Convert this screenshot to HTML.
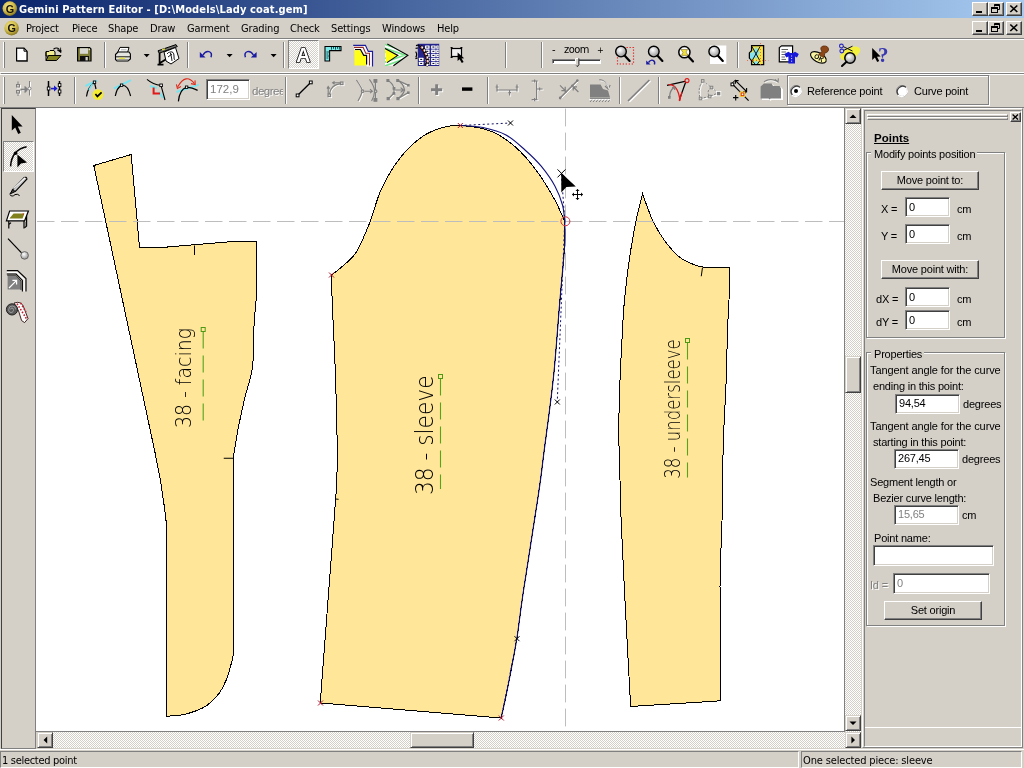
<!DOCTYPE html>
<html>
<head>
<meta charset="utf-8">
<title>Gemini Pattern Editor - [D:\Models\Lady coat.gem]</title>
<style>
html,body{margin:0;padding:0;}
body{width:1024px;height:768px;overflow:hidden;background:#d4d0c8;position:relative;
 font-family:"Liberation Sans",sans-serif;font-size:11px;color:#000;}
.abs{position:absolute;}
.tah{font-family:"DejaVu Sans Condensed","Liberation Sans","DejaVu Sans",sans-serif;font-size:11px;letter-spacing:-0.15px;white-space:nowrap;}
.ms{font-family:"Liberation Sans",sans-serif;font-size:11px;letter-spacing:-0.2px;white-space:nowrap;line-height:13px;}
#title{left:0;top:0;width:1024px;height:18px;background:linear-gradient(to right,#0a246a 0%,#a6caf0 100%);}
#title .t{left:19px;top:3px;color:#fff;font-weight:bold;line-height:14px;letter-spacing:0.13px;}
.wb{position:absolute;width:16px;height:14px;background:#d4d0c8;box-sizing:border-box;
 border:1px solid;border-color:#fff #404040 #404040 #fff;box-shadow:inset -1px -1px 0 #808080;}
.hline{position:absolute;height:1px;left:0;width:1024px;}
.vsep{position:absolute;width:1px;background:#808080;box-shadow:1px 0 0 #fff;}
.grip{position:absolute;width:1px;background:#fff;box-shadow:1px 0 0 #808080;}
.menu span{position:absolute;top:0;line-height:15px;}
.sunk{position:absolute;box-sizing:border-box;background:#fff;border:1px solid;border-color:#808080 #fff #fff #808080;box-shadow:inset 1px 1px 0 #404040,inset -1px -1px 0 #d4d0c8;}
.btn{position:absolute;box-sizing:border-box;background:#d4d0c8;border:1px solid;border-color:#fff #404040 #404040 #fff;box-shadow:inset -1px -1px 0 #808080;text-align:center;}
.grp{position:absolute;box-sizing:border-box;border:1px solid #808080;box-shadow:1px 1px 0 #fff,inset 1px 1px 0 #fff;}
.dith{background-color:#fff;background-image:
 linear-gradient(45deg,#d4d0c8 25%,transparent 25%,transparent 75%,#d4d0c8 75%),
 linear-gradient(45deg,#d4d0c8 25%,transparent 25%,transparent 75%,#d4d0c8 75%);
 background-size:2px 2px;background-position:0 0,1px 1px;}
.pressed{position:absolute;box-sizing:border-box;border:1px solid;border-color:#808080 #fff #fff #808080;}
.sb{position:absolute;width:16px;height:16px;box-sizing:border-box;background:#d4d0c8;border:1px solid;border-color:#d4d0c8 #404040 #404040 #d4d0c8;box-shadow:inset 1px 1px 0 #fff,inset -1px -1px 0 #808080;}
.lbl{position:absolute;margin-top:1px;}
.dis{color:#808080;text-shadow:1px 1px 0 #fff;}
</style>
</head>
<body>
<div id="root" style="position:absolute;left:0;top:0;width:1024px;height:768px;will-change:transform;">

<!-- ===== title bar ===== -->
<div id="title" class="abs">
  <div class="abs tah t">Gemini Pattern Editor - [D:\Models\Lady coat.gem]</div>
  <div class="wb" style="left:972px;top:2px;"></div>
  <div class="wb" style="left:988px;top:2px;"></div>
  <div class="wb" style="left:1006px;top:2px;"></div>
</div>

<!-- ===== menu bar ===== -->
<div class="abs menu tah" style="left:0;top:21px;width:1024px;height:16px;">
  <span style="left:26px">Project</span>
  <span style="left:72px">Piece</span>
  <span style="left:108px">Shape</span>
  <span style="left:150px">Draw</span>
  <span style="left:187px">Garment</span>
  <span style="left:241px">Grading</span>
  <span style="left:290px">Check</span>
  <span style="left:331px">Settings</span>
  <span style="left:382px">Windows</span>
  <span style="left:437px">Help</span>
</div>
<div class="wb" style="left:972px;top:21px;"></div>
<div class="wb" style="left:988px;top:21px;"></div>
<div class="wb" style="left:1006px;top:21px;"></div>

<!-- separators between bands -->
<div class="hline" style="top:38px;background:#808080"></div>
<div class="hline" style="top:39px;background:#fff"></div>
<div class="hline" style="top:72px;background:#fff"></div>
<div class="hline" style="top:73px;background:#808080;left:1px"></div>
<div class="hline" style="top:74px;background:#fff"></div>
<div class="hline" style="top:107px;background:#808080;"></div>

<!-- toolbar 1 grips & separators -->
<div class="grip" style="left:3px;top:42px;height:26px"></div>
<div class="vsep" style="left:104px;top:42px;height:26px"></div>
<div class="vsep" style="left:187px;top:42px;height:26px"></div>
<div class="vsep" style="left:283px;top:42px;height:26px"></div>
<div class="vsep" style="left:505px;top:42px;height:26px"></div>
<div class="vsep" style="left:541px;top:42px;height:26px"></div>
<div class="vsep" style="left:737px;top:42px;height:26px"></div>
<!-- toolbar 2 grips & separators -->
<div class="grip" style="left:3px;top:77px;height:27px"></div>
<div class="vsep" style="left:74px;top:77px;height:27px"></div>
<div class="vsep" style="left:285px;top:77px;height:27px"></div>
<div class="vsep" style="left:418px;top:77px;height:27px"></div>
<div class="vsep" style="left:487px;top:77px;height:27px"></div>
<div class="vsep" style="left:619px;top:77px;height:27px"></div>
<div class="vsep" style="left:658px;top:77px;height:27px"></div>

<!-- pressed "A" button -->
<div class="pressed dith" style="left:288px;top:40px;width:31px;height:29px;"></div>

<!-- zoom slider -->
<div class="abs tah" style="left:552px;top:43px;line-height:14px;">-</div>
<div class="abs tah" style="left:564px;top:43px;line-height:14px;letter-spacing:-0.5px;">zoom</div>
<div class="abs tah" style="left:597px;top:43px;line-height:14px;font-size:9px;">+</div>
<div class="abs" style="left:552px;top:59px;width:49px;height:5px;box-sizing:border-box;background:#fff;border:1px solid;border-color:#808080 #fff #fff #808080;box-shadow:inset 1px 1px 0 #404040"></div>

<!-- angle field in toolbar 2 -->
<div class="sunk" style="left:206px;top:79px;width:44px;height:21px;"></div>
<div class="abs" style="left:210px;top:82px;font-size:11.5px;line-height:14px;color:#808080;">172,9</div>
<div class="abs dis" style="left:252px;top:84px;font-size:11.5px;letter-spacing:-0.5px;line-height:14px;width:31px;overflow:hidden;white-space:nowrap;">degrees</div>

<!-- reference / curve point radio group -->
<div class="grp" style="left:787px;top:75px;width:202px;height:30px;"></div>
<div class="abs" style="left:807px;top:84px;font-size:11px;letter-spacing:-0.15px;line-height:14px;white-space:nowrap;">Reference point</div>
<div class="abs" style="left:914px;top:84px;font-size:11px;letter-spacing:-0.2px;line-height:14px;white-space:nowrap;">Curve point</div>

<!-- ===== left tool palette ===== -->
<div class="abs" style="left:1px;top:108px;width:35px;height:641px;box-sizing:border-box;border:1px solid;border-color:#404040 #808080 #808080 #404040;"></div>
<div class="pressed dith" style="left:3px;top:141px;width:31px;height:31px;"></div>

<!-- ===== canvas ===== -->
<div class="abs" id="canvas" style="left:36px;top:108px;width:808px;height:623px;background:#fff;"></div>
<div class="abs" style="left:844px;top:108px;width:1px;height:624px;background:#808080"></div>
<div class="abs" style="left:36px;top:731px;width:809px;height:1px;background:#808080"></div>

<!-- vertical scrollbar -->
<div class="abs dith" style="left:845px;top:108px;width:16px;height:624px;"></div>
<div class="sb" style="left:845px;top:108px;"></div>
<div class="sb" style="left:845px;top:715px;"></div>
<div class="sb" style="left:845px;top:356px;height:37px;"></div>
<!-- horizontal scrollbar -->
<div class="abs dith" style="left:37px;top:732px;width:824px;height:16px;"></div>
<div class="sb" style="left:37px;top:732px;"></div>
<div class="sb" style="left:845px;top:732px;"></div>
<div class="sb" style="left:410px;top:732px;width:64px;"></div>

<!-- ===== right panel ===== -->
<div class="abs" style="left:862px;top:108px;width:161px;height:640px;box-sizing:border-box;border:1px solid;border-color:#fff #808080 #808080 #fff;"></div>
<div class="abs" style="left:864px;top:110px;width:158px;height:637px;box-sizing:border-box;border:1px solid;border-color:#808080 #fff #fff #808080;"></div>
<div class="abs" style="left:865px;top:727px;width:156px;height:1px;background:#fff"></div>
<!-- gripper bars -->
<div class="abs" style="left:867px;top:114px;width:141px;height:3px;box-sizing:border-box;border:1px solid;border-color:#fff #808080 #808080 #fff;"></div>
<div class="abs" style="left:867px;top:117px;width:141px;height:3px;box-sizing:border-box;border:1px solid;border-color:#fff #808080 #808080 #fff;"></div>
<div class="btn" style="left:1010px;top:112px;width:11px;height:10px;"></div>

<div class="lbl ms" style="left:874px;top:131px;font-weight:bold;font-size:11.5px;text-decoration:underline;letter-spacing:0;">Points</div>

<div class="grp" style="left:866px;top:152px;width:139px;height:186px;"></div>
<div class="lbl ms" style="left:871px;top:147px;background:#d4d0c8;padding:0 2px 0 3px;">Modify points position</div>
<div class="btn ms" style="left:881px;top:171px;width:98px;height:19px;line-height:16px;">Move point to:</div>
<div class="lbl ms" style="left:881px;top:202px;">X =</div>
<div class="sunk" style="left:905px;top:197px;width:45px;height:20px;"></div>
<div class="lbl ms" style="left:909px;top:200px;">0</div>
<div class="lbl ms" style="left:957px;top:202px;">cm</div>
<div class="lbl ms" style="left:881px;top:229px;">Y =</div>
<div class="sunk" style="left:905px;top:224px;width:45px;height:20px;"></div>
<div class="lbl ms" style="left:909px;top:227px;">0</div>
<div class="lbl ms" style="left:957px;top:229px;">cm</div>
<div class="btn ms" style="left:881px;top:260px;width:98px;height:19px;line-height:16px;">Move point with:</div>
<div class="lbl ms" style="left:876px;top:292px;">dX =</div>
<div class="sunk" style="left:905px;top:287px;width:45px;height:20px;"></div>
<div class="lbl ms" style="left:909px;top:290px;">0</div>
<div class="lbl ms" style="left:957px;top:292px;">cm</div>
<div class="lbl ms" style="left:876px;top:315px;">dY =</div>
<div class="sunk" style="left:905px;top:310px;width:45px;height:20px;"></div>
<div class="lbl ms" style="left:909px;top:313px;">0</div>
<div class="lbl ms" style="left:957px;top:315px;">cm</div>

<div class="grp" style="left:866px;top:352px;width:139px;height:274px;"></div>
<div class="lbl ms" style="left:871px;top:347px;background:#d4d0c8;padding:0 2px 0 3px;">Properties</div>
<div class="lbl ms" style="left:870px;top:363px;letter-spacing:-0.1px;">Tangent angle for the curve</div>
<div class="lbl ms" style="left:873px;top:379px;">ending in this point:</div>
<div class="sunk" style="left:895px;top:394px;width:65px;height:20px;"></div>
<div class="lbl ms" style="left:899px;top:396px;">94,54</div>
<div class="lbl ms" style="left:963px;top:397px;">degrees</div>
<div class="lbl ms" style="left:870px;top:419px;letter-spacing:-0.1px;">Tangent angle for the curve</div>
<div class="lbl ms" style="left:873px;top:435px;">starting in this point:</div>
<div class="sunk" style="left:894px;top:449px;width:65px;height:20px;"></div>
<div class="lbl ms" style="left:898px;top:451px;">267,45</div>
<div class="lbl ms" style="left:962px;top:452px;">degrees</div>
<div class="lbl ms" style="left:870px;top:475px;">Segment length or</div>
<div class="lbl ms" style="left:873px;top:491px;">Bezier curve length:</div>
<div class="sunk" style="left:894px;top:505px;width:65px;height:20px;"></div>
<div class="lbl ms" style="left:898px;top:507px;color:#808080;">15,65</div>
<div class="lbl ms" style="left:962px;top:508px;">cm</div>
<div class="lbl ms" style="left:874px;top:531px;">Point name:</div>
<div class="sunk" style="left:873px;top:545px;width:121px;height:21px;"></div>
<div class="lbl ms dis" style="left:870px;top:578px;">Id =</div>
<div class="sunk" style="left:893px;top:573px;width:97px;height:21px;"></div>
<div class="lbl ms" style="left:897px;top:576px;color:#808080;">0</div>
<div class="btn ms" style="left:884px;top:601px;width:98px;height:19px;line-height:16px;">Set origin</div>

<!-- ===== status bar ===== -->
<div class="hline" style="top:749px;background:#fff"></div>
<div class="abs" style="left:0;top:751px;width:799px;height:17px;box-sizing:border-box;border:1px solid;border-color:#808080 #fff #fff #808080;"></div>
<div class="abs" style="left:801px;top:751px;width:221px;height:17px;box-sizing:border-box;border:1px solid;border-color:#808080 #fff #fff #808080;"></div>
<div class="abs tah" style="left:2px;top:754px;line-height:14px;letter-spacing:-0.3px;">1 selected point</div>
<div class="abs tah" style="left:803px;top:754px;line-height:14px;">One selected piece: sleeve</div>

<!--ICONS-->
<svg class="abs" style="left:0;top:0;pointer-events:none" width="1024" height="768" viewBox="0 0 1024 768">
<defs>
  <radialGradient id="gold" cx="0.4" cy="0.35" r="0.7">
    <stop offset="0" stop-color="#f4e88c"/><stop offset="0.55" stop-color="#d2bc4a"/><stop offset="1" stop-color="#7c6c1c"/>
  </radialGradient>
  <radialGradient id="lens" cx="0.4" cy="0.35" r="0.7">
    <stop offset="0" stop-color="#ffffff"/><stop offset="0.5" stop-color="#c8c8c8"/><stop offset="1" stop-color="#8c8c8c"/>
  </radialGradient>
  <g id="wmin"><rect x="4" y="9" width="6" height="2" fill="#000"/></g>
  <g id="wres" fill="none" stroke="#000" stroke-width="1">
    <path d="M6.5,4.5 V2.5 H11.5 V7.5 H9.5"/><path d="M6.5,3.2 H11.5" stroke-width="1.6"/>
    <rect x="3.5" y="5.5" width="6" height="5"/><path d="M3.5,6.2 H9.5" stroke-width="1.6"/>
  </g>
  <g id="wcls"><path d="M4.3,3.5 L11.3,10 M11.3,3.5 L4.3,10" stroke="#000" stroke-width="1.7" fill="none"/></g>
  <g id="mag">
    <circle cx="0" cy="0" r="5.3" fill="url(#lens)" stroke="#000" stroke-width="1.4"/>
    <path d="M3.8,4.2 L8.6,9.3" stroke="#000" stroke-width="2.2" stroke-linecap="round"/>
  </g>
  <g id="dd"><path d="M0,0 h6 l-3,3.2z" fill="#000"/></g>
</defs>

<!-- app icons -->
<circle cx="9.8" cy="8.6" r="7.3" fill="url(#gold)"/>
<text x="9.9" y="12.6" text-anchor="middle" font-family="'Liberation Sans',sans-serif" font-weight="bold" font-size="10.8" fill="#141008">G</text>
<circle cx="11.6" cy="28.1" r="7.3" fill="url(#gold)"/>
<text x="11.7" y="32.1" text-anchor="middle" font-family="'Liberation Sans',sans-serif" font-weight="bold" font-size="10.8" fill="#141008">G</text>

<!-- window buttons glyphs -->
<use href="#wmin" x="972" y="2"/><use href="#wres" x="988" y="2"/><use href="#wcls" x="1006" y="2"/>
<use href="#wmin" x="972" y="21"/><use href="#wres" x="988" y="21"/><use href="#wcls" x="1006" y="21"/>

<!-- ===== toolbar 1 ===== -->
<!-- new -->
<path d="M17.5,49.5 H25.5 L28,52 V62 H17.5Z" fill="#404040" opacity="0.55"/>
<path d="M16.6,48.2 H24 L27,51.2 V60.8 H16.6Z" fill="#fff" stroke="#000" stroke-width="1.2"/>
<path d="M24,48.2 V51.2 H27" fill="none" stroke="#000" stroke-width="1"/>
<!-- open -->
<path d="M46,51.5 H49 L50,50.5 H54 L55,52 V56 H46Z" fill="#f0ec90" stroke="#000" stroke-width="1"/>
<path d="M46,60.5 L48.5,55.5 H61 L56.5,60.5Z" fill="#848420" stroke="#000" stroke-width="1"/>
<path d="M46,52 V60.5" stroke="#000" stroke-width="1"/>
<path d="M53.5,49.2 Q56.5,46.8 59.3,49.3" fill="none" stroke="#000" stroke-width="1.1"/>
<path d="M57.3,50 H61 V52.6Z M60.6,47.6 V51" fill="#000" stroke="#000" stroke-width="0.8"/>
<!-- save -->
<path d="M77.6,47.6 H89.6 L91,49 V61 H77.6Z" fill="#808038" stroke="#000" stroke-width="1.2"/>
<rect x="80" y="48.2" width="8" height="5.6" fill="#d8d8d0"/>
<rect x="80" y="56" width="9" height="5" fill="#101010"/>
<rect x="85.5" y="57" width="2.3" height="3.4" fill="#d0d0c8"/>
<rect x="88.6" y="48.6" width="1.4" height="1.6" fill="#e8e8e0"/>
<!-- printer -->
<path d="M117.6,52.4 L120,47.4 H129 L127.6,52.4Z" fill="#fff" stroke="#000" stroke-width="1"/>
<path d="M121,49.8 H126.6" stroke="#909090" stroke-width="0.7"/>
<path d="M115.5,54.5 L118,52 H129 L130.4,54 V59 L128,61 H117 L115.5,59.5Z" fill="#e4e4e0" stroke="#000" stroke-width="1.1"/>
<path d="M115.5,56.8 H130.4" stroke="#000" stroke-width="0.9"/>
<rect x="119" y="57.6" width="6" height="1.5" fill="#e8e040"/>
<path d="M116.5,59.8 H128.6" stroke="#808080" stroke-width="1"/>
<use href="#dd" x="143.7" y="54"/>
<!-- plotter -->
<path d="M158,50.8 L176,44.6 L177.3,46.6 L159.2,53.2Z" fill="#70706c" stroke="#000" stroke-width="1"/>
<path d="M162,49.9 l3,-1" stroke="#e0e040" stroke-width="1.2"/>
<path d="M159.6,53 V64 M157.5,64.6 H163.5 M160,63 L168,58" stroke="#000" stroke-width="1.8" fill="none"/>
<path d="M164,52 L175.5,47.5 L179,58.5 L171,64 L166,61Z" fill="#fff" stroke="#000" stroke-width="1"/>
<path d="M167,54 Q170,50 171,55 T172,61 M170,52 Q174,51 174,56 T175,59 M168,57 L172,54" fill="none" stroke="#000" stroke-width="0.9"/>
<!-- undo / redo -->
<g fill="#1c1ca0" stroke="none">
  <path d="M199.8,52 V57.4 H205.6Z"/>
  <path d="M243.6,0" />
  <path d="M256.6,52 V57.4 H250.8Z"/>
</g>
<path d="M203,55 Q205.5,50.6 209,51.6 T211,57.2" fill="none" stroke="#1c1ca0" stroke-width="1.5"/>
<path d="M253.4,55 Q250.9,50.6 247.4,51.6 T245.4,57.2" fill="none" stroke="#1c1ca0" stroke-width="1.5"/>
<use href="#dd" x="226.6" y="54"/>
<use href="#dd" x="270.6" y="54"/>
<!-- A -->
<text x="303.2" y="61.6" text-anchor="middle" font-family="'Liberation Sans',sans-serif" font-weight="bold" font-size="19.5" fill="#fff" stroke="#000" stroke-width="1.7" stroke-linejoin="round" paint-order="stroke">A</text>
<!-- ruler L -->
<path d="M325,46.5 H341 V50.6 H329.6 V61 H325Z" fill="#7ce8e8" stroke="#000" stroke-width="1.1"/>
<path d="M326.4,52 h3 M326.4,54 h2 M326.4,56 h3 M326.4,58 h2 M331.5,47 v2.6 M333.5,47 v1.8 M335.5,47 v2.6 M337.5,47 v1.8 M339.4,47 v2.6" stroke="#004040" stroke-width="0.9"/>
<!-- grading -->
<path d="M353.2,45.2 H365.4 L368.3,51.3 H372.5 V66.4 H366.6 V56 H363.4 L360,50.3 H354.4 V48 Z" fill="#fff"/>
<path d="M354.4,50.2 H360.4 L363.6,56 H366.2 V65.6 H354.4Z" fill="#ffff18"/>
<path d="M353.2,45.3 H365.4 L368.3,51.4 H372.5 V66.5" fill="none" stroke="#1c1c9c" stroke-width="1.2"/>
<path d="M354,47.4 H363.1 L365.7,53.3 H369.5 V65.6" fill="none" stroke="#902828" stroke-width="1.1"/>
<path d="M355,49.5 H360.5 L363.7,55.3 H366.6 V64.6" fill="none" stroke="#000" stroke-width="1.2"/>
<!-- triangle -->
<clipPath id="triU"><path d="M385,43.5 L388,43.5 L408,55.2 H385Z"/></clipPath>
<clipPath id="triL"><path d="M385,55.2 H408 L393.4,65.9 H385Z"/></clipPath>
<path d="M385,44.4 L388,44 L407.9,55.2 L393.4,65.8 H385Z" fill="#fff"/>
<g stroke="#78e48c" stroke-width="1.7" clip-path="url(#triU)">
  <path d="M383,43.6 L409,52.8 M383,47.4 L409,56.6 M383,51.2 L409,60.4 M390,42.4 L409,49"/>
</g>
<g stroke="#78e48c" stroke-width="1.7" clip-path="url(#triL)">
  <path d="M383,66.6 L409,57.4 M383,62.8 L409,53.6 M383,59 L409,49.8 M388,68.6 L409,61.2"/>
</g>
<path d="M385.2,48.7 L397.6,55.5 L386,62.8Z" fill="#ffff18"/>
<path d="M387.3,43.9 L407.9,55.2 L393.4,65.8 M385,48.4 L397.8,55.4 L387,62.6" fill="none" stroke="#000" stroke-width="1.1"/>
<!-- grid -->
<rect x="417.8" y="43.8" width="21.4" height="22.2" fill="#24248c"/>
<g fill="#fff"><rect x="425.0" y="45.4" width="4.6" height="3.3" rx="0.5"/><rect x="431.1" y="45.4" width="4.6" height="3.3" rx="0.5"/><rect x="436.2" y="45.4" width="2.6" height="3.3" rx="0.5"/><rect x="425.0" y="49.6" width="4.6" height="3.3" rx="0.5"/><rect x="431.1" y="49.6" width="4.6" height="3.3" rx="0.5"/><rect x="436.2" y="49.6" width="2.6" height="3.3" rx="0.5"/><rect x="425.0" y="53.8" width="4.6" height="3.3" rx="0.5"/><rect x="431.1" y="53.8" width="4.6" height="3.3" rx="0.5"/><rect x="436.2" y="53.8" width="2.6" height="3.3" rx="0.5"/><rect x="418.9" y="57.8" width="4.6" height="3.3" rx="0.5"/><rect x="425.0" y="57.8" width="4.6" height="3.3" rx="0.5"/><rect x="431.1" y="57.8" width="4.6" height="3.3" rx="0.5"/><rect x="436.2" y="57.8" width="2.6" height="3.3" rx="0.5"/><rect x="418.9" y="61.8" width="4.6" height="3.3" rx="0.5"/><rect x="425.0" y="61.8" width="4.6" height="3.3" rx="0.5"/><rect x="431.1" y="61.8" width="4.6" height="3.3" rx="0.5"/><rect x="436.2" y="61.8" width="2.6" height="3.3" rx="0.5"/></g>
<g fill="#101030"><rect x="426.3" y="46.5" width="2" height="1.1"/><rect x="432.4" y="46.5" width="2" height="1.1"/><rect x="437.4" y="46.5" width="1" height="1.1"/><rect x="426.3" y="50.8" width="2" height="1.1"/><rect x="432.4" y="50.8" width="2" height="1.1"/><rect x="437.4" y="50.8" width="1" height="1.1"/><rect x="426.3" y="54.9" width="2" height="1.1"/><rect x="432.4" y="54.9" width="2" height="1.1"/><rect x="437.4" y="54.9" width="1" height="1.1"/><rect x="420.2" y="58.9" width="2" height="1.1"/><rect x="426.3" y="58.9" width="2" height="1.1"/><rect x="432.4" y="58.9" width="2" height="1.1"/><rect x="437.4" y="58.9" width="1" height="1.1"/><rect x="420.2" y="62.9" width="2" height="1.1"/><rect x="426.3" y="62.9" width="2" height="1.1"/><rect x="432.4" y="62.9" width="2" height="1.1"/><rect x="437.4" y="62.9" width="1" height="1.1"/></g>
<path d="M416,45.6 Q418.6,44.4 419.4,46.4 M415.6,48.4 L418,48 M415.6,51.6 Q417.6,54 415.8,57.4 M415.4,58.6 L417.6,58" fill="none" stroke="#000" stroke-width="1.2"/>
<path d="M420.4,46 L424,50.4 L426.4,56 L427.6,62 L426,66" fill="none" stroke="#180808" stroke-width="3.6"/>
<path d="M421.4,46.6 L425,51.4 L427.2,57.4 L428,63.4 L426.6,66.4" fill="none" stroke="#fff" stroke-width="1.8" stroke-dasharray="2.2 1.6"/>
<path d="M420.6,47 L424.4,52 L426.4,58 L427,64" fill="none" stroke="#c02828" stroke-width="0.9" stroke-dasharray="1.4 2.4"/>
<!-- select rect -->
<rect x="451.5" y="48.5" width="10" height="8" fill="#f0f0f0" stroke="#000" stroke-width="1.2"/>
<path d="M450.6,47.6 h2 M460.4,47.6 h2 M450.6,57.4 h2" stroke="#000" stroke-width="1.4"/>
<path d="M457.6,52.4 V61 L459.6,59.2 L461.8,63 L463.6,62 L461.6,58.4 L464.2,58.2Z" fill="#000"/>

<!-- slider thumb -->
<path d="M575.5,58.5 H578.5 V64.5 L577,66.5 L575.5,64.5Z" fill="#d4d0c8" stroke="#808080" stroke-width="1"/>
<path d="M575.5,64.5 V58.5 H578" fill="none" stroke="#fff" stroke-width="1"/>
<path d="M579,58.5 V64.7 L577.2,67" fill="none" stroke="#404040" stroke-width="1"/>
<!-- magnifier 1 : zoom window -->
<rect x="617.5" y="47.5" width="16" height="16.5" fill="none" stroke="#e02020" stroke-width="1.2" stroke-dasharray="1.3 1.7"/>
<use href="#mag" x="621" y="51.6"/>
<!-- magnifier 2 : previous zoom -->
<use href="#mag" x="653.8" y="51.6"/>
<path d="M646.2,60.4 V64.6 H650.6Z" fill="#1c1ca0"/>
<path d="M648.5,62.5 Q650.5,59.4 653,60.4 T654.4,64.6" fill="none" stroke="#1c1ca0" stroke-width="1.4"/>
<!-- magnifier 3 : zoom piece -->
<circle cx="684.4" cy="52.2" r="5.6" fill="#fff" stroke="#000" stroke-width="1.5"/>
<path d="M681,49.5 H687.6 L686,52 L688,55.4 H681.4 L683,52.4Z" fill="#f0e040" stroke="#605010" stroke-width="0.5"/>
<path d="M688.4,56.6 L693,61.4" stroke="#000" stroke-width="2.2" stroke-linecap="round"/>
<!-- magnifier 4 : zoom all -->
<rect x="710" y="45.5" width="16.3" height="18.5" fill="#fff"/>
<use href="#mag" x="714.2" y="51.6"/>
<!-- symmetry icon -->
<path d="M751.6,45.6 H763.6 V64.6 H751.6 V60.4 L749.4,58 V53 L751.6,50.6Z" fill="#f8e440" stroke="#000" stroke-width="1.3"/>
<path d="M756.1,46.6 L759.6,52.8 L756.1,60 L752.6,52.8Z" fill="#84e4f4"/>
<path d="M750,52.4 L752.6,52.8 L754.4,56.6 L752,60 L750,58Z M752.6,64 L756.1,60 L759.4,64Z" fill="#84e4f4"/>
<path d="M752,46.6 L759.8,60.6 M760,46.6 L752.2,60.6 M752.4,61 L755,64 M759.6,61 L757.4,64" stroke="#000" stroke-width="0.9" fill="none"/>
<path d="M760.5,43 V66" stroke="#e85828" stroke-width="0.8" stroke-dasharray="1 2"/>
<path d="M747,60.5 H768.4" stroke="#e85828" stroke-width="0.8" stroke-dasharray="1 2"/>
<!-- doc + shirt -->
<path d="M779.3,47.6 L781.6,45.8 H792.6 V61.8 H779.3Z" fill="#fff" stroke="#000" stroke-width="1.2"/>
<path d="M781.5,49.5 H788 M781.5,52 H786 M781.5,54.5 H785 M781.5,57 H785 M781.5,59.4 H786" stroke="#505050" stroke-width="0.9"/>
<path d="M784.4,54 L788.4,51.8 L790.4,53 H793 L795,51.8 L798.8,54 L797,57.4 L795,56.6 V63.4 H788.4 V56.6 L786.2,57.4Z" fill="#1818d8"/>
<path d="M791.6,55.5 v6.5" stroke="#fff" stroke-width="0.9" stroke-dasharray="1 1.6"/>
<!-- stamp -->
<ellipse cx="818.4" cy="57.4" rx="8.6" ry="4.6" transform="rotate(28 818.4 57.4)" fill="#f8f4a0" stroke="#000" stroke-width="1.1"/>
<path d="M818.6,54.4 L822,51.6 Q819,47 823.4,46 Q828.6,45.6 828.6,50 Q827.6,53 825,52.8 L823.6,57.6Z" fill="#8c4818" stroke="#5c2808" stroke-width="0.8"/>
<text transform="translate(813.6,57.6) rotate(28)" font-family="'Liberation Sans',sans-serif" font-weight="bold" font-size="6.5" fill="#000">OK</text>
<!-- scissors + magnifier -->
<path d="M840,56 Q846,46.5 856,46.5 Q862,47.5 859.5,52.5 Q855,59 848,60.5 Q840.5,61 840,56Z" fill="#f4f040"/>
<circle cx="850" cy="58" r="5.2" fill="url(#lens)" stroke="#000" stroke-width="1.5"/>
<path d="M846.6,61.8 L842,66" stroke="#000" stroke-width="2" stroke-linecap="round"/>
<circle cx="841.4" cy="46" r="1.9" fill="none" stroke="#2828c0" stroke-width="1.1"/>
<circle cx="841.8" cy="51" r="1.9" fill="none" stroke="#2828c0" stroke-width="1.1"/>
<path d="M843.2,46.6 L852.5,51 M843.6,50.4 L852.5,46.2" stroke="#101010" stroke-width="1"/>
<!-- help cursor -->
<path d="M872.2,48 V60 L874.9,57.6 L877.2,62 L879.2,61 L877,56.8 L880.6,56.6Z" fill="#000"/>
<text x="878" y="61.6" font-family="'Liberation Serif',serif" font-weight="bold" font-size="21" fill="#3838b0">?</text>

<!-- ===== toolbar 2 ===== -->
<!-- t2-1 disabled align -->
<g stroke="#fff" fill="none" stroke-width="1" transform="translate(1,1)">
  <path d="M29.5,81 V95.5 M21,89.5 H27"/><rect x="16.5" y="84.5" width="3" height="2.5"/><rect x="16.5" y="90.5" width="3" height="2.5"/>
</g>
<g stroke="#808080" fill="none" stroke-width="1">
  <path d="M29.5,81 V95.5"/><path d="M20.5,89.5 H27" stroke-width="1.6"/><path d="M25,86.5 L28,89.5 L25,92.5Z" fill="#808080"/>
  <rect x="16.5" y="84.5" width="3" height="2.5" fill="#d4d0c8"/><rect x="16.5" y="90.5" width="3" height="2.5" fill="#d4d0c8"/>
  <path d="M18,81.5 V84.5 M18,93 V96"/><circle cx="29.5" cy="88.5" r="1.5" fill="#fff"/>
</g>
<!-- t2-2 align -->
<path d="M48.5,81 V96 M59.5,81 V96" stroke="#000" stroke-width="1.5"/>
<rect x="47.3" y="87" width="2.6" height="3" fill="#fff" stroke="#000" stroke-width="0.9"/>
<rect x="58.3" y="83.6" width="2.6" height="3" fill="#fff" stroke="#000" stroke-width="0.9"/>
<rect x="58.3" y="90" width="2.6" height="3" fill="#fff" stroke="#000" stroke-width="0.9"/>
<path d="M51,88.6 H55" stroke="#1c1cd0" stroke-width="1.6"/><path d="M54,85.6 L57.6,88.6 L54,91.6Z" fill="#1c1cd0"/>
<!-- t2-3 curve + check -->
<path d="M85.5,86 L97,80.5" stroke="#78e4f0" stroke-width="2"/>
<path d="M86.5,96.5 Q87.5,87.5 94.5,82.5 L96,89" fill="none" stroke="#000" stroke-width="1.2"/>
<path d="M92.5,84 L89,90" stroke="#78e4f0" stroke-width="1.6"/>
<rect x="93.3" y="81" width="2.4" height="2.4" fill="#fff" stroke="#000" stroke-width="0.9"/>
<circle cx="98" cy="94.6" r="5.4" fill="#f4ec30"/>
<path d="M95.4,94 L97.4,96.4 L101.6,92.4" fill="none" stroke="#000" stroke-width="1.7"/>
<!-- t2-4 curve + tangent -->
<path d="M114,88.5 L131,80.2" stroke="#78e4f0" stroke-width="2"/>
<path d="M115.3,96 Q117,87.5 121.5,85.4 Q127.5,84 130.6,96" fill="none" stroke="#000" stroke-width="1.2"/>
<rect x="120.4" y="84" width="2.4" height="2.4" fill="#fff" stroke="#000" stroke-width="0.9"/>
<!-- t2-5 corner -->
<path d="M150,86 L157,88 M159,92 L163,98" stroke="#78e4f0" stroke-width="2.2"/>
<path d="M147,79.4 Q153,84.6 161,85.4 L165,100" fill="none" stroke="#000" stroke-width="1.1"/>
<path d="M153.6,87.6 V93.6 H160" fill="none" stroke="#e01818" stroke-width="2"/>
<rect x="159.8" y="84" width="2.6" height="2.6" fill="#fff" stroke="#000" stroke-width="0.9"/>
<!-- t2-6 rotate tangent -->
<path d="M176.5,92 L199,84.6" stroke="#78e4f0" stroke-width="2"/>
<path d="M178.4,101.4 Q179.5,89.5 186.5,87.4 Q191,87 197.6,90.4" fill="none" stroke="#000" stroke-width="1.2"/>
<rect x="185.4" y="86" width="2.4" height="2.4" fill="#fff" stroke="#000" stroke-width="0.9"/>
<path d="M177.6,87 Q186,72.5 194.4,83.6" fill="none" stroke="#e02818" stroke-width="1.1"/>
<path d="M176.4,84.4 L177.4,88.4 L181,86.6 M191,83.6 L195.2,84.6 L195,80.4" fill="none" stroke="#e02818" stroke-width="1.1"/>
<!-- t2-7 line -->
<path d="M298,95 L310.4,82.8" stroke="#000" stroke-width="1.3"/>
<rect x="296.2" y="94" width="2.8" height="2.8" fill="#fff" stroke="#000" stroke-width="1"/>
<rect x="309.4" y="81" width="2.8" height="2.8" fill="#fff" stroke="#000" stroke-width="1"/>
<!-- t2-8 disabled arc -->
<g transform="translate(1,1)" stroke="#fff" fill="none" stroke-width="1"><path d="M329.5,94 Q330.5,84.5 341,83.6"/><rect x="328" y="94" width="2.6" height="2.6"/><rect x="340.4" y="82" width="2.6" height="2.6"/></g>
<g stroke="#808080" fill="none" stroke-width="1.1"><path d="M329.5,94 Q330.5,84.5 341,83.6"/><path d="M328.2,87 V94 M327,88.6 L328.2,86.6 L329.6,88.6 M333,82.8 H340 M334.6,81.4 L332.6,82.8 L334.6,84.2"/>
<rect x="328" y="94" width="2.6" height="2.6" fill="#d4d0c8"/><rect x="340.4" y="82" width="2.6" height="2.6" fill="#d4d0c8"/></g>
<!-- t2-9 disabled mirror -->
<g transform="translate(1,1)" stroke="#fff" fill="none" stroke-width="1"><path d="M356.4,80 Q362,88 362.4,91 Q361,96 358,101"/><path d="M375.5,81 V100"/></g>
<g stroke="#808080" fill="none" stroke-width="1.1">
  <path d="M356.4,80 Q362,88 362.4,91 Q361,96 358,101"/>
  <path d="M369.4,79.4 Q374,85.6 374.6,91 Q374.4,96 371.6,101"/>
  <path d="M375.6,81 V100.4" stroke-width="1.5"/>
  <path d="M364.6,91.2 H372 M370,89.2 L372.4,91.2 L370,93.2"/>
  <rect x="374" y="79.6" width="2.8" height="2.6" fill="#808080"/><rect x="374" y="98.6" width="2.8" height="2.6" fill="#808080"/>
  <circle cx="362.6" cy="91.2" r="1.3" fill="#d4d0c8"/><circle cx="375.6" cy="91.2" r="1.3" fill="#d4d0c8"/>
</g>
<!-- t2-10 disabled double -->
<g transform="translate(1,1)" stroke="#fff" fill="none" stroke-width="1"><path d="M388,80.4 Q393.6,84 394,88.6 V93 L388.6,98.6"/><path d="M397.6,80.4 Q405,84.6 408,86 M408.4,92.6 L398,98.6"/></g>
<g stroke="#808080" fill="none" stroke-width="1.2">
  <path d="M388,80.4 Q393.6,84 394,88.6 V93 L388.6,98.6"/>
  <path d="M397.6,80.4 Q403,83 404.6,90 Q403,95 398,98.6"/>
  <path d="M397.6,80.4 L408.6,85.4 M408.4,92.6 L398,98.6"/>
  <path d="M394.6,90 H403 M400.6,87.6 L403.6,90 L400.6,92.4"/>
</g>
<g fill="#808080"><rect x="386.4" y="79" width="3" height="3"/><rect x="386.6" y="97" width="3.2" height="3.2"/><rect x="392.6" y="87" width="2.8" height="2.8"/><rect x="392.6" y="92" width="2.8" height="2.8"/><rect x="396.2" y="79" width="3" height="3"/><rect x="396.4" y="97" width="3.2" height="3.2"/><rect x="407" y="84" width="2.6" height="2.6"/><rect x="407" y="91.4" width="2.6" height="2.6"/></g>
<!-- t2-11 plus (disabled) -->
<path d="M432,90.7 H443.2 M437.7,85.2 V96" stroke="#fff" stroke-width="3"/>
<path d="M431,89.7 H442.2 M436.7,84.2 V95" stroke="#808080" stroke-width="3"/>
<!-- t2-12 minus -->
<rect x="462" y="87.4" width="10.4" height="3.4" fill="#000"/>
<!-- t2-13 disabled h-dim -->
<g transform="translate(1,1)" stroke="#fff" fill="none" stroke-width="1"><path d="M497,90 H517.4 M497,84.4 V91.4 M517,84.4 V91.4 M509.6,90 V95.6"/></g>
<g stroke="#808080" fill="none" stroke-width="1.2"><path d="M497,90 H517.4 M497,84.4 V91.4 M517,84.4 V91.4 M509.6,90 V95.6 M495.6,87 H498.6 M515.6,87 H518.6 M508.4,92.6 H511"/></g>
<!-- t2-14 disabled v-dim -->
<g transform="translate(1,1)" stroke="#fff" fill="none" stroke-width="1"><path d="M536.6,80.6 V100 M531.6,81 H537.6 M531.6,99.6 H537.6 M536.6,89 H542.6"/></g>
<g stroke="#808080" fill="none" stroke-width="1.2"><path d="M536.6,80.6 V100 M531.6,81 H537.6 M531.6,99.6 H537.6 M536.6,89 H542.6 M534.6,79.4 V82.6 M534.6,98 V101.2 M539.6,87.4 V90.6"/></g>
<!-- t2-15 disabled diag arrows -->
<path d="M561,99 L578.5,81.5" stroke="#fff" stroke-width="1"/>
<g stroke="#808080" fill="none" stroke-width="1.2"><path d="M560,98 L577.5,80.5"/><path d="M560,85.4 L565,90.4 M565.2,86.8 V90.6 H561.4 M578.4,92 L573.4,87 M573.2,90.6 V86.8 H577"/></g>
<circle cx="560.2" cy="98" r="1.4" fill="#808080"/><circle cx="565.8" cy="91.6" r="1.2" fill="#808080"/><circle cx="572.4" cy="85.6" r="1.2" fill="#808080"/><circle cx="577.4" cy="80.6" r="1.3" fill="#808080"/>
<!-- t2-16 disabled piece rotate -->
<path d="M590,84.4 H600.6 L603,89 L608,90.4 L610,97.4 H590Z" fill="#808080"/>
<path d="M589.4,99.6 H611" stroke="#fff" stroke-width="1.4"/>
<path d="M590,98.4 H610" stroke="#808080" stroke-width="1"/>
<path d="M590,102 l2,-2.4 M593,102 l2,-2.4 M596,102 l2,-2.4 M599,102 l2,-2.4 M602,102 l2,-2.4 M605,102 l2,-2.4 M608,102 l2,-2.4" stroke="#808080" stroke-width="1"/>
<path d="M599.4,79.6 Q606,80 608,88" fill="none" stroke="#808080" stroke-width="1.1"/>
<path d="M605,86 L608.2,89 L610.2,85" fill="none" stroke="#808080" stroke-width="1.1"/>
<path d="M600.4,80.8 Q606.6,81 609,89" fill="none" stroke="#fff" stroke-width="0.8"/>
<!-- t2-17 disabled diag dotted -->
<path d="M629.4,102 L650.6,81" stroke="#fff" stroke-width="1.4"/>
<path d="M628,101 L649.4,80" stroke="#808080" stroke-width="1.6"/>
<!-- t2-18 red curve -->
<path d="M667,85.4 L686,81.2 L679.2,100.4" fill="none" stroke="#000" stroke-width="1.3"/>
<path d="M668.6,84.6 Q678,84 680,100.6" fill="none" stroke="#e01818" stroke-width="1.3"/>
<path d="M679.4,101 L682,92" stroke="#e01818" stroke-width="1.2"/>
<circle cx="687" cy="80.6" r="2" fill="#d4d0c8" stroke="#e01818" stroke-width="1.1"/>
<path d="M669.6,96.6 Q670,90 674,87.6 M672,87.6 L674.6,87 L674.8,90" fill="none" stroke="#808080" stroke-width="1.3"/>
<rect x="668" y="96" width="2.6" height="2.8" fill="#808080"/>
<!-- t2-19 disabled shape -->
<g transform="translate(1,1)" stroke="#fff" fill="none" stroke-width="1"><path d="M702.6,81 L711.4,87.4 L718,93 L709.6,96.4 L700.4,98.6 Q697,89 702.6,81"/></g>
<g stroke="#808080" fill="none" stroke-width="1" stroke-dasharray="2.2 1.4"><path d="M702.6,81 L711.4,87.4 L718,93 L709.6,96.4 L700.4,98.6 Q697,89 702.6,81"/><path d="M711.4,87.6 Q706,91 709.4,96.4"/></g>
<g fill="#d4d0c8" stroke="#808080" stroke-width="0.9"><rect x="701.4" y="79.6" width="2.6" height="2.6"/><rect x="710.2" y="86.2" width="2.6" height="2.6"/><rect x="699.2" y="97.2" width="2.6" height="2.6"/><rect x="708.4" y="95.2" width="2.6" height="2.6"/></g>
<rect x="716.4" y="91.4" width="4.4" height="4.4" fill="#808080" stroke="#fff" stroke-width="0.8"/>
<!-- t2-20 add point -->
<path d="M733,84.6 L748.6,100.6" stroke="#000" stroke-width="1.2"/>
<path d="M736,81.2 L746,91" stroke="#000" stroke-width="1.1"/>
<path d="M735.4,83.8 V80.6 H738.6 M746.6,88 V91.6 H743" fill="none" stroke="#000" stroke-width="1.1"/>
<path d="M732.2,83 L735.6,80 M743.6,94.6 L746.8,91.6" stroke="#000" stroke-width="1"/>
<rect x="731" y="83" width="2.8" height="2.8" fill="#fff" stroke="#000" stroke-width="1"/>
<rect x="739.6" y="91.4" width="5.6" height="5.6" fill="#f8d040"/>
<rect x="741.2" y="93" width="2.6" height="2.6" fill="#fff" stroke="#d04010" stroke-width="1"/>
<path d="M733,97.6 H738.4 M735.7,95 V100.4" stroke="#000" stroke-width="1.1"/>
<!-- t2-21 disabled pieces -->
<path d="M761,87 L765,83.6 H772 L773.6,86 H780 L782,88.6 V99 H770.6 L769.6,100 L768.6,99 H761Z" fill="#fff" transform="translate(1,1)"/>
<path d="M760.6,86.4 L764,83.6 H771.6 L773,86 H779.6 L781,88.6 V98.4 H770.6 L769.6,99.4 L768.6,98.4 H760.6Z" fill="#808080"/>
<path d="M764,81.6 Q770.6,77.6 777.6,81.6 M775,79.4 L778,82 L778.4,78.4" fill="none" stroke="#808080" stroke-width="1.1"/>
<path d="M765,82.6 Q771,78.8 777.4,82.8" fill="none" stroke="#fff" stroke-width="0.8"/>
<!-- radio buttons -->
<g>
  <circle cx="796" cy="91" r="5.5" fill="#fff" stroke="#808080" stroke-width="1"/>
  <path d="M792.3,94.9 A5.5,5.5 0 0 1 799.9,87.2" fill="none" stroke="#404040" stroke-width="1.2"/>
  <path d="M800.3,87.5 A5.8,5.8 0 0 1 792,95.3" fill="none" stroke="#fff" stroke-width="1.2"/>
  <circle cx="796" cy="91" r="2" fill="#000"/>
  <circle cx="902" cy="91" r="5.5" fill="#fff" stroke="#808080" stroke-width="1"/>
  <path d="M898.3,94.9 A5.5,5.5 0 0 1 905.9,87.2" fill="none" stroke="#404040" stroke-width="1.2"/>
  <path d="M906.3,87.5 A5.8,5.8 0 0 1 898,95.3" fill="none" stroke="#fff" stroke-width="1.2"/>
</g>

<!-- ===== left palette ===== -->
<!-- arrow -->
<path d="M11.8,115 V130.6 L15.2,127.6 L18.2,134 L20.8,132.8 L17.8,126.6 L22.6,126.4Z" fill="#000"/>
<!-- curve + arrow (pressed) -->
<path d="M10.6,166.4 Q11.5,150 26.6,146.8" fill="none" stroke="#000" stroke-width="1.5"/>
<circle cx="15.6" cy="153.2" r="1.8" fill="#000"/>
<path d="M17.4,154.4 V167.4 L21,163.4 L27,162.6Z" fill="#000"/>
<!-- pencil -->
<path d="M12.4,190 L24,177.6 Q26.4,176.4 27,179 L15.4,191.4Z" fill="#c8c8c8" stroke="#000" stroke-width="1.1"/>
<path d="M13.6,188.6 L25,177.8" stroke="#fff" stroke-width="1.2"/>
<path d="M12.4,190 L10,194 L15.4,191.4" fill="#404040" stroke="#000" stroke-width="1"/>
<path d="M9.6,194.4 Q12,197.6 15,194.6 Q17.4,193.4 19.6,195.6" fill="none" stroke="#000" stroke-width="1"/>
<!-- table -->
<path d="M9.6,211 H28.4 L24.6,220.8 H6.4Z" fill="#fff" stroke="#000" stroke-width="1.2"/>
<path d="M13.6,213.6 H24.4 L22.6,218.4 H9.4Z" fill="#80801c"/>
<path d="M22.4,213.4 l1.8,0 l-0.6,1.8z" fill="#d03020"/>
<path d="M8.8,221 V228.4 M24,221 V228.4 M8.8,224.6 L11,222.6 M26.6,216 V226 L24.8,227.6" fill="none" stroke="#000" stroke-width="1.2"/>
<path d="M25.6,222 v4" stroke="#808080" stroke-width="1"/>
<!-- pin -->
<path d="M8,238.6 L22,253.4" stroke="#000" stroke-width="1.2"/>
<circle cx="24.6" cy="255.4" r="3.8" fill="url(#lens)" stroke="#606060" stroke-width="0.9"/>
<!-- seam -->
<path d="M6.8,270.6 H17.6 L26,278.6 V291.6" fill="none" stroke="#000" stroke-width="1.1"/>
<path d="M6.8,272.4 H16.8 L24.2,279.6 V291.6" fill="none" stroke="#fff" stroke-width="1.2"/>
<path d="M6.8,274 H16 L22.4,280.4 V291.6" fill="none" stroke="#000" stroke-width="1.1"/>
<path d="M7.6,275.4 H15.4 L20.6,281 V289.4 H7.6Z" fill="#808080"/>
<path d="M7.2,275.2 H15.6 L21,281 V290" fill="none" stroke="#202020" stroke-width="0.9"/>
<path d="M9,288 L16.4,280.6 M12.4,280.4 H16.6 V284.6" fill="none" stroke="#fff" stroke-width="1.2"/>
<!-- tape -->
<path d="M14,303 Q22,300.4 24,308 L28,318.6 L24.6,322.6 L21.6,320.6 L18.6,311Z" fill="#fff" stroke="#301010" stroke-width="0.9"/>
<path d="M17,303.6 L27,319.6 M20.6,303 L26,312" fill="none" stroke="#c02030" stroke-width="1.6" stroke-dasharray="1.6 1.6"/>
<circle cx="12" cy="309.4" r="5.6" fill="#585858" stroke="#202020" stroke-width="1"/>
<path d="M12,309.4 m-1.4,0 a1.4,1.4 0 1 1 2.8,0 a2.4,2.4 0 1 1 -4.6,0 a3.4,3.4 0 1 1 6.8,0" fill="none" stroke="#b0b0b0" stroke-width="0.8"/>
<!-- scrollbar arrows -->
<path d="M849.5,118 h7 l-3.5,-3.6z M849.5,721.4 h7 l-3.5,3.6z" fill="#000"/>
<path d="M47.2,736.4 v7 l-3.6,-3.5z M851.4,736.4 v7 l3.6,-3.5z" fill="#000"/>
<!-- panel close x -->
<path d="M1012.6,114.6 L1018,119.6 M1018,114.6 L1012.6,119.6" stroke="#000" stroke-width="1.3"/>

</svg>
<!--/ICONS-->
<!--CANVAS-->
<svg class="abs" style="left:36px;top:108px" width="808" height="623" viewBox="36 108 808 623" shape-rendering="auto">
<g fill="#ffe699" stroke="#000" stroke-width="1" stroke-linejoin="miter" shape-rendering="crispEdges">
<path d="M93.8,165.5L131.2,154.5 L139.5,247.0 L167.5,247.0 L236.2,241.2 L256.2,241.2C256.3,249.0 257.1,274.5 256.8,288.0 C256.4,301.5 255.0,308.8 254.2,322.0 C253.5,335.2 254.0,354.5 252.5,367.0 C251.0,379.5 247.4,386.6 245.0,397.0 C242.6,407.4 240.0,419.3 238.0,429.5 C236.0,439.7 234.0,453.2 233.2,458.0L233.4,600.0C233.4,608.1 233.8,638.5 233.5,648.8 C233.2,659.0 233.1,656.0 231.9,661.2 C230.7,666.5 228.4,674.6 226.2,680.0 C224.1,685.4 221.9,689.6 218.8,693.8 C215.6,697.9 211.5,702.1 207.5,705.0 C203.5,707.9 199.4,709.6 195.0,711.2 C190.6,712.9 186.0,714.2 181.2,715.0 C176.5,715.8 169.0,716.0 166.6,716.2L166.4,540.0C166.4,537.3 166.6,529.3 166.3,524.0 C166.0,518.7 165.6,515.7 164.5,508.0 C163.4,500.3 161.6,487.2 160.0,478.0 C158.4,468.8 155.8,456.8 155.0,452.5L93.8,165.5Z"/>
<path d="M331.5,275.0C333.1,273.8 336.9,271.2 341.0,267.5 C345.1,263.8 351.2,260.0 356.0,252.5 C360.8,245.0 365.6,232.9 369.8,222.5 C373.9,212.1 376.2,200.4 381.0,190.0 C385.8,179.6 391.8,168.8 398.5,160.0 C405.2,151.2 413.9,142.8 421.0,137.5 C428.1,132.2 434.5,130.0 441.0,128.0 C447.5,126.0 451.9,125.0 460.2,125.5 C468.6,126.0 481.7,127.6 491.0,131.2 C500.3,134.9 508.5,141.0 516.0,147.5 C523.5,154.0 529.8,161.7 536.0,170.0 C542.2,178.3 548.7,189.0 553.5,197.5 C558.3,206.0 562.9,217.3 564.8,221.2C564.7,225.4 565.4,232.5 564.6,246.0 C563.8,259.5 561.6,280.2 559.8,302.0 C557.9,323.8 556.1,352.0 553.5,377.0 C550.9,402.0 546.5,432.5 544.0,452.0 C541.5,471.5 542.0,470.3 538.5,494.0 C535.0,517.7 526.6,569.8 523.0,594.0 C519.4,618.2 519.2,623.7 516.8,639.0 C514.2,654.3 510.6,672.8 508.0,686.0 C505.4,699.2 502.4,712.7 501.2,718.0L320.5,703.0C320.7,700.2 320.2,704.2 321.5,686.0 C322.8,667.8 326.1,626.0 328.5,594.0 C330.9,562.0 334.5,517.7 336.0,494.0 C337.5,470.3 337.3,471.5 337.2,452.0 C337.2,432.5 336.3,402.0 335.5,377.0 C334.7,352.0 332.9,319.0 332.2,302.0 C331.6,285.0 331.6,279.5 331.5,275.0Z"/>
<path d="M642.5,193.8C641.5,198.1 638.3,209.8 636.2,220.0 C634.2,230.2 632.0,241.7 630.0,255.0 C628.0,268.3 625.8,287.5 624.5,300.0 C623.2,312.5 623.2,316.7 622.5,330.0 C621.8,343.3 620.6,363.3 620.0,380.0 C619.4,396.7 618.8,413.3 618.8,430.0 C618.8,446.7 619.6,464.7 620.0,480.0 C620.4,495.3 620.3,500.3 621.2,522.0 C622.1,543.7 623.9,579.2 625.5,610.0 C627.1,640.8 629.8,690.4 630.6,706.5L720.6,700.8C720.5,681.8 719.8,616.8 720.0,587.0 C720.2,557.2 721.6,539.8 722.0,522.0 C722.4,504.2 722.2,495.3 722.5,480.0 C722.8,464.7 723.1,446.7 723.8,430.0 C724.4,413.3 725.6,396.7 726.2,380.0 C726.9,363.3 727.0,343.3 727.5,330.0 C728.0,316.7 728.6,310.4 729.0,300.0 C729.4,289.6 729.8,272.9 730.0,267.5L702.5,267.0C701.2,266.7 698.8,266.6 695.0,265.0 C691.2,263.4 685.0,261.5 680.0,257.5 C675.0,253.5 669.6,247.5 665.0,241.2 C660.4,235.0 656.2,227.9 652.5,220.0 C648.8,212.1 644.2,198.1 642.5,193.8Z"/>
</g>
<path d="M194.5,245.5 V255 M223.75,458.25 H233 M702.5,267.5 L701.25,276.25 M335.6,499 l3,0.3" stroke="#000" stroke-width="1" fill="none"/>
<path d="M37,221.5 H844" stroke="#bdbdbd" stroke-width="1" stroke-dasharray="17.5 6.5" fill="none"/>
<path d="M565.5,108.6 V731" stroke="#bdbdbd" stroke-width="1" stroke-dasharray="17.8 6.2" fill="none"/>
<path d="M460.2,125.5C464.0,125.8 475.4,125.9 483.0,127.5 C490.6,129.1 499.0,131.2 506.0,135.0 C513.0,138.8 519.1,144.8 525.0,150.0 C530.9,155.2 536.2,160.2 541.2,166.2 C546.2,172.3 551.5,179.8 555.0,186.2 C558.5,192.7 560.9,199.2 562.5,205.0 C564.1,210.8 564.4,218.5 564.8,221.2C564.7,225.4 565.4,232.5 564.6,246.0 C563.8,259.5 561.6,280.2 559.8,302.0 C557.9,323.8 556.1,352.0 553.5,377.0 C550.9,402.0 546.5,432.5 544.0,452.0 C541.5,471.5 542.0,470.3 538.5,494.0 C535.0,517.7 526.6,569.8 523.0,594.0 C519.4,618.2 519.2,623.7 516.8,639.0 C514.2,654.3 510.6,672.8 508.0,686.0 C505.4,699.2 502.4,712.7 501.2,718.0" stroke="#101078" stroke-width="1.1" fill="none"/>
<path d="M460.25,125.5 L510.5,123 M564.75,221.25 L561.4,173.4 M564.75,221.25 L557.25,402 M501.25,718 L517,638.75" stroke="#101060" stroke-width="1" stroke-dasharray="2 2.5" fill="none"/>
<path d="M508.0,120.5 l5.0,5.0 M508.0,125.5 l5.0,-5.0" stroke="#000" stroke-width="1" fill="none"/>
<path d="M554.8,399.5 l5.0,5.0 M554.8,404.5 l5.0,-5.0" stroke="#000" stroke-width="1" fill="none"/>
<path d="M514.5,636.2 l5.0,5.0 M514.5,641.2 l5.0,-5.0" stroke="#000" stroke-width="1" fill="none"/>
<path d="M557.5,169.4 l8.0,8.0 M557.5,177.4 l8.0,-8.0" stroke="#000" stroke-width="1" fill="none"/>
<path d="M329.0,272.5 l5.0,5.0 M329.0,277.5 l5.0,-5.0" stroke="#b01028" stroke-width="1" fill="none"/>
<path d="M457.8,123.0 l5.0,5.0 M457.8,128.0 l5.0,-5.0" stroke="#b01028" stroke-width="1" fill="none"/>
<path d="M318.0,700.5 l5.0,5.0 M318.0,705.5 l5.0,-5.0" stroke="#b01028" stroke-width="1" fill="none"/>
<path d="M498.8,715.5 l5.0,5.0 M498.8,720.5 l5.0,-5.0" stroke="#b01028" stroke-width="1" fill="none"/>
<circle cx="565.4" cy="221.3" r="4.5" fill="none" stroke="#d03040" stroke-width="1"/>
<path d="M203.2,331.5 V426.0" stroke="#55a41c" stroke-width="1.1" stroke-dasharray="17 7" fill="none"/><rect x="201.2" y="327.5" width="4" height="4" fill="none" stroke="#4c9a14" stroke-width="1"/>
<path d="M440.5,378.5 V489.0" stroke="#55a41c" stroke-width="1.1" stroke-dasharray="17 7" fill="none"/><rect x="438.5" y="374.5" width="4" height="4" fill="none" stroke="#4c9a14" stroke-width="1"/>
<path d="M687.5,342.5 V477.5" stroke="#55a41c" stroke-width="1.1" stroke-dasharray="17 7" fill="none"/><rect x="685.5" y="338.5" width="4" height="4" fill="none" stroke="#4c9a14" stroke-width="1"/>
<text transform="translate(191.3,428.0) rotate(-90)" font-family="'DejaVu Sans Light','DejaVu Sans','Liberation Sans',sans-serif" font-weight="200" font-size="21.5" textLength="100.0" lengthAdjust="spacingAndGlyphs" fill="#000">38 - facing</text>
<text transform="translate(433.0,495.0) rotate(-90)" font-family="'DejaVu Sans Light','DejaVu Sans','Liberation Sans',sans-serif" font-weight="200" font-size="25.0" textLength="119.5" lengthAdjust="spacingAndGlyphs" fill="#000">38 - sleeve</text>
<text transform="translate(680.0,478.8) rotate(-90)" font-family="'DejaVu Sans Light','DejaVu Sans','Liberation Sans',sans-serif" font-weight="200" font-size="20.5" textLength="139.5" lengthAdjust="spacingAndGlyphs" fill="#000">38 - undersleeve</text>
<path d="M561.3,173 V192.6 L566.4,187 L575.8,186.4 Z" fill="#000"/>
<path d="M572.5,194.5 H582.5 M577.5,189.5 V199.5" stroke="#000" stroke-width="1" fill="none"/>
<path d="M572,194.5 l2,-2 v4z M583,194.5 l-2,-2 v4z M577.5,189 l-2,2 h4z M577.5,200 l-2,-2 h4z" fill="#000"/>
</svg>
<!--/CANVAS-->
</div>
</body>
</html>
